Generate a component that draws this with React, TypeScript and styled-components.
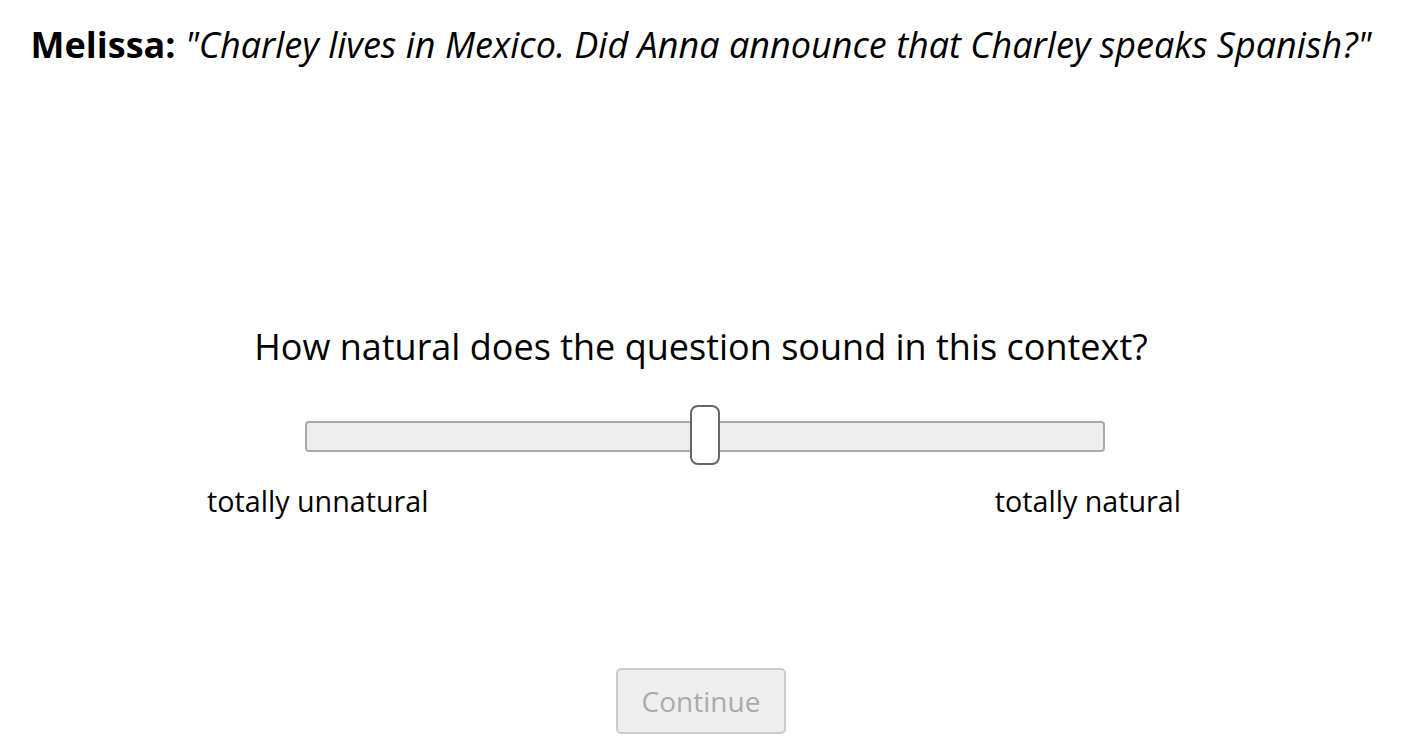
import { useState } from "react"
import styled, { createGlobalStyle } from "styled-components"

const GlobalStyle = createGlobalStyle`
  html, body {
    margin: 0;
    padding: 0;
    background: #fff;
  }
  body {
    font-family: "Open Sans", "Noto Sans", sans-serif;
    color: #000;
  }
`

const Page = styled.main`
  display: flex;
  flex-direction: column;
  align-items: center;
  width: 1406px;
  height: 752px;
  padding-right: 4px;
  box-sizing: border-box;
  overflow: hidden;
`

const Context = styled.p`
  margin: 20px 0 0;
  font-size: 36px;
  line-height: 50px;
  white-space: nowrap;
  text-align: center;
`

const Speaker = styled.strong`
  font-weight: 700;
`

const Utterance = styled.em`
  font-style: italic;
`

const Question = styled.p`
  margin: 252px 0 0;
  font-size: 36px;
  line-height: 50px;
  text-align: center;
`

const SliderRow = styled.div`
  display: flex;
  justify-content: center;
  width: 100%;
  margin-top: 33px;
  padding-left: 8px;
  box-sizing: border-box;
`

const Range = styled.input`
  -webkit-appearance: none;
  appearance: none;
  width: 800px;
  height: 63px;
  margin: 0;
  padding: 0;
  background: transparent;
  cursor: pointer;

  &:focus {
    outline: none;
  }

  &::-webkit-slider-runnable-track {
    box-sizing: border-box;
    height: 31px;
    background: #eeeeee;
    border: 2px solid #aaaaaa;
    border-radius: 4px;
  }

  &::-webkit-slider-thumb {
    -webkit-appearance: none;
    box-sizing: border-box;
    width: 30px;
    height: 60px;
    margin-top: -18px;
    background: #ffffff;
    border: 2px solid #666666;
    border-radius: 8px;
  }
`

const Labels = styled.div`
  display: flex;
  justify-content: space-between;
  width: 100%;
  margin-top: 13px;
  padding: 0 221px 0 207px;
  box-sizing: border-box;
  font-size: 28.7px;
  line-height: 40px;
`

const ContinueButton = styled.button`
  margin-top: 147px;
  width: 170px;
  height: 66px;
  padding: 0;
  background: #eeeeee;
  border: 2px solid #cccccc;
  border-radius: 5px;
  color: #aaaaaa;
  font-family: "Open Sans", "Noto Sans", sans-serif;
  font-size: 28px;
  cursor: default;
`

export default function App() {
  const [value, setValue] = useState(50)

  return (
    <>
      <GlobalStyle />
      <Page>
        <Context>
          <Speaker>Melissa:</Speaker>{" "}
          <Utterance>"Charley lives in Mexico. Did Anna announce that Charley speaks Spanish?"</Utterance>
        </Context>
        <Question>How natural does the question sound in this context?</Question>
        <SliderRow>
          <Range
            type="range"
            min={0}
            max={100}
            value={value}
            onChange={(e) => setValue(Number(e.target.value))}
          />
        </SliderRow>
        <Labels>
          <span>totally unnatural</span>
          <span>totally natural</span>
        </Labels>
        <ContinueButton disabled>Continue</ContinueButton>
      </Page>
    </>
  )
}
